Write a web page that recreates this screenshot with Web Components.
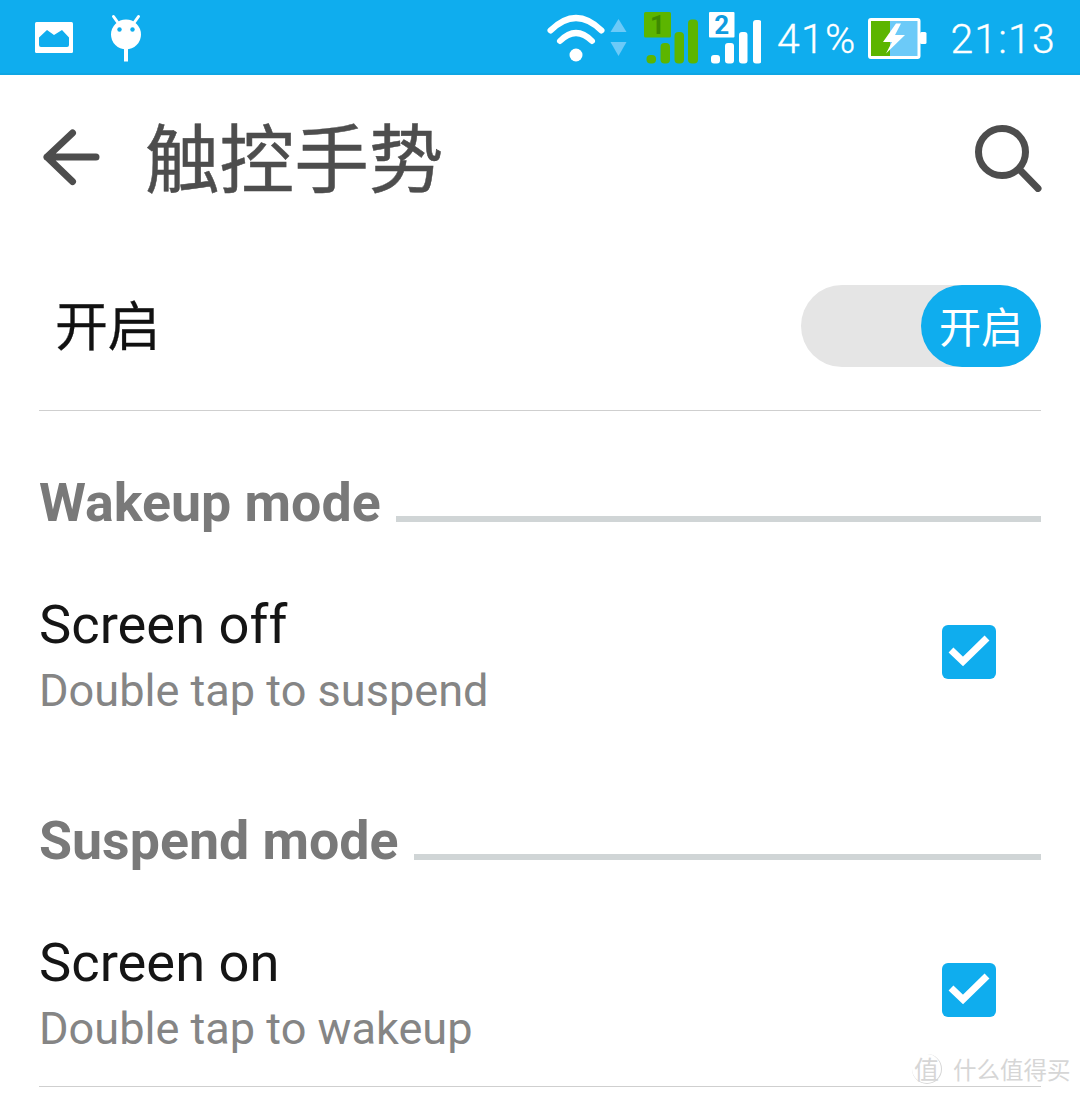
<!DOCTYPE html>
<html lang="zh"><head><meta charset="utf-8"><title>触控手势</title>
<style>
html,body{margin:0;padding:0;background:#fff}
body{width:1080px;height:1095px;overflow:hidden;font-family:Roboto,"Noto Sans CJK SC",sans-serif;position:relative}
</style></head><body>
<status-bar></status-bar>
<app-toolbar title="触控手势"></app-toolbar>
<main-switch label="开启"></main-switch>
<section-head title="Wakeup mode" style="margin-top:60px"></section-head>
<pref-row title="Screen off" sub="Double tap to suspend" style="margin-bottom:61px"></pref-row>
<section-head title="Suspend mode"></section-head>
<pref-row title="Screen on" sub="Double tap to wakeup" last></pref-row>
<water-mark></water-mark>
<script>
function def(name,css,html){
  customElements.define(name,class extends HTMLElement{
    connectedCallback(){
      if(this.shadowRoot)return;
      const r=this.attachShadow({mode:'open'});
      const t=document.createElement('template');
      t.innerHTML='<style>'+css+'</style>'+html(this);
      r.appendChild(t.content.cloneNode(true));
    }
  });
}
const at=(e,n)=>e.getAttribute(n)||'';
def('status-bar',`
:host{display:flex;align-items:flex-start;height:75px;background:#0fadee;box-shadow:inset 0 -2px 0 #0fa6e4;color:#fff;font-family:Roboto,sans-serif;box-sizing:border-box}
svg{display:block;flex:none;height:75px}
.sp{flex:1}
.t{font-size:41px;line-height:78px;letter-spacing:1.2px;font-weight:300;-webkit-text-stroke:.3px #fff}
`,()=>`
<svg style="margin-left:35px" width="38" viewBox="35 0 38 75"><rect x="35" y="22" width="38" height="31" rx="1.5" fill="#fff"/><path d="M39 37.500L47 30l7 5 8-5 7 7.500V45q0 2-2 2H41q-2 0-2-2z" fill="#0fadee"/></svg>
<svg style="margin-left:37px" width="32" viewBox="110 0 32 75"><path d="M113.500 16.500l5 7M138.500 16.500l-5 7" stroke="#fff" stroke-width="3" stroke-linecap="round"/><circle cx="126" cy="34.500" r="15" fill="#fff"/><circle cx="119.500" cy="29.500" r="2.200" fill="#0fadee"/><circle cx="132.500" cy="29.500" r="2.200" fill="#0fadee"/><rect x="124" y="48" width="4" height="13.500" fill="#fff"/></svg>
<span class="sp"></span>
<svg width="82" viewBox="546 0 82 75"><g fill="none" stroke="#fff" stroke-width="6" stroke-linecap="round"><path d="M550.500 30.500Q576 5.500 601.500 30.500"/><path d="M560 41Q576 25 592 41"/></g><circle cx="576" cy="55" r="6.500" fill="#fff"/><path d="M610.500 32L618.500 19 626.500 32z" fill="#6ccaf8"/><path d="M610.500 42L618.500 56 626.500 42z" fill="#6ccaf8"/></svg>
<svg style="margin-left:16px" width="54" viewBox="644 0 54 75"><rect x="644" y="12" width="27" height="25.500" rx="1.500" fill="#5cb500"/><text x="657.500" y="33.500" text-anchor="middle" font-family="Roboto,sans-serif" font-weight="700" font-size="26" fill="#3d8a00">1</text><g fill="#5cb500"><rect x="646.500" y="55" width="9.500" height="8.500" rx="4"/><rect x="660.500" y="43" width="9.500" height="20.500" rx="4"/><rect x="674.500" y="32" width="9.500" height="31.500" rx="4"/><rect x="688" y="19.500" width="10" height="44" rx="4"/></g></svg>
<svg style="margin-left:11px" width="52" viewBox="709 0 52 75"><rect x="709" y="12" width="25.500" height="25.500" rx="1" fill="#fff"/><text x="721.800" y="33.500" text-anchor="middle" font-family="Roboto,sans-serif" font-weight="700" font-size="26" fill="#0f9ce0">2</text><g fill="#fff"><rect x="711" y="55" width="9" height="8.500" rx="3"/><rect x="725" y="43" width="9" height="20.500" rx="3"/><rect x="739" y="32" width="8.500" height="31.500" rx="3"/><rect x="753" y="20" width="8.500" height="43.500" rx="3"/></g></svg>
<span class="t" style="margin-left:16px">41%</span>
<svg style="margin-left:12px" width="59" viewBox="868 0 59 75"><rect x="869.500" y="19.500" width="49.500" height="38" rx="1.500" fill="#6ccaf8" stroke="#fff" stroke-width="3"/><rect x="871" y="21" width="19" height="35" fill="#5cb500"/><rect x="920" y="32" width="6.500" height="12" rx="1.500" fill="#fff"/><path d="M896 23.500L883 42h9l-6 11.500L905 35h-10l6-11.500z" fill="#fff"/></svg>
<span class="t" style="margin-left:23px;margin-right:24px">21:13</span>
`);
def('app-toolbar',`
:host{display:flex;align-items:center;height:165px;padding-bottom:1px;box-sizing:border-box;background:#fff;color:#4d4d4d}
svg{flex:none;display:block}
h1{margin:-6px 0 0 44px;flex:1;font:400 74.600px/1 "Noto Sans CJK SC",sans-serif;-webkit-text-stroke:.5px #4d4d4d}
`,e=>`
<svg style="margin-left:41px" width="60" height="60" viewBox="41 128 60 60"><path d="M72.500 134L47 158l25.500 24.500M47 158h49" fill="none" stroke="#4d4d4d" stroke-width="7" stroke-linecap="round" stroke-linejoin="round"/></svg>
<h1>${at(e,'title')}</h1>
<svg style="margin-right:37px" width="70" height="70" viewBox="973 122 70 70"><circle cx="1002" cy="152" r="23.500" fill="none" stroke="#4d4d4d" stroke-width="7"/><path d="M1020 170l18 18.500" stroke="#4d4d4d" stroke-width="7" stroke-linecap="round"/></svg>
`);
def('main-switch',`
:host{display:flex;align-items:center;justify-content:space-between;height:171px;margin:0 39px;border-bottom:1px solid #cfcfcf;box-sizing:border-box;padding-top:1px}
.l{font:400 53px/1 "Noto Sans CJK SC",sans-serif;color:#111;margin:-5px 0 0 16px;letter-spacing:-.5px;-webkit-text-stroke:.3px #111}
.tr{width:240px;height:82px;border-radius:41px;background:#e5e5e5;display:flex;justify-content:flex-end}
.k{width:120px;height:82px;border-radius:41px;background:#0fadee;color:#fff;font:400 42px/80px "Noto Sans CJK SC",sans-serif;text-align:center}
`,e=>`<span class="l">${at(e,'label')}</span><div class="tr"><div class="k">${at(e,'label')}</div></div>`);
def('section-head',`
:host{display:flex;align-items:flex-end;margin:0 39px;gap:15px;height:60px}
.t{font:700 53.700px/60px Roboto,sans-serif;color:#797979;position:relative;top:2px}
.ln{flex:1;height:6px;background:#d0d5d6;margin-bottom:9px}
`,e=>`<span class="t">${at(e,'title')}</span><span class="ln"></span>`);
def('pref-row',`
:host{display:flex;align-items:flex-start;justify-content:space-between;margin:0 39px;height:217px;box-sizing:border-box}
:host([last]){height:218px;border-bottom:1px solid #cfcfcf}
.a{display:flex;flex-direction:column;padding-top:62px;gap:8px}
.t{font:400 54.300px/64px Roboto,sans-serif;color:#151515}
.s{font:400 45.100px/52px Roboto,sans-serif;color:#858585}
.c{width:54px;height:54px;border-radius:6px;background:#0fadee;margin:94px 45px 0 0;display:block}
`,e=>`<div class="a"><div class="t">${at(e,'title')}</div><div class="s">${at(e,'sub')}</div></div>
<svg class="c" viewBox="0 0 54 54"><path d="M9 25l12 11.500L45 13" fill="none" stroke="#fff" stroke-width="7"/></svg>`);
def('water-mark',`
:host{position:absolute;left:912px;top:1053px;display:flex;align-items:center;gap:11px;color:#d6d6d6;font-family:"Noto Sans CJK SC",sans-serif}
.c{width:29px;height:29px;font-size:25px;line-height:28px;border-right:1px solid #d6d6d6;border-bottom:1px solid #d6d6d6;border-radius:50%;text-align:center}
.w{font-size:23.500px;line-height:32px}
`,()=>`<span class="c">值</span><span class="w">什么值得买</span>`);
</script>
</body></html>
